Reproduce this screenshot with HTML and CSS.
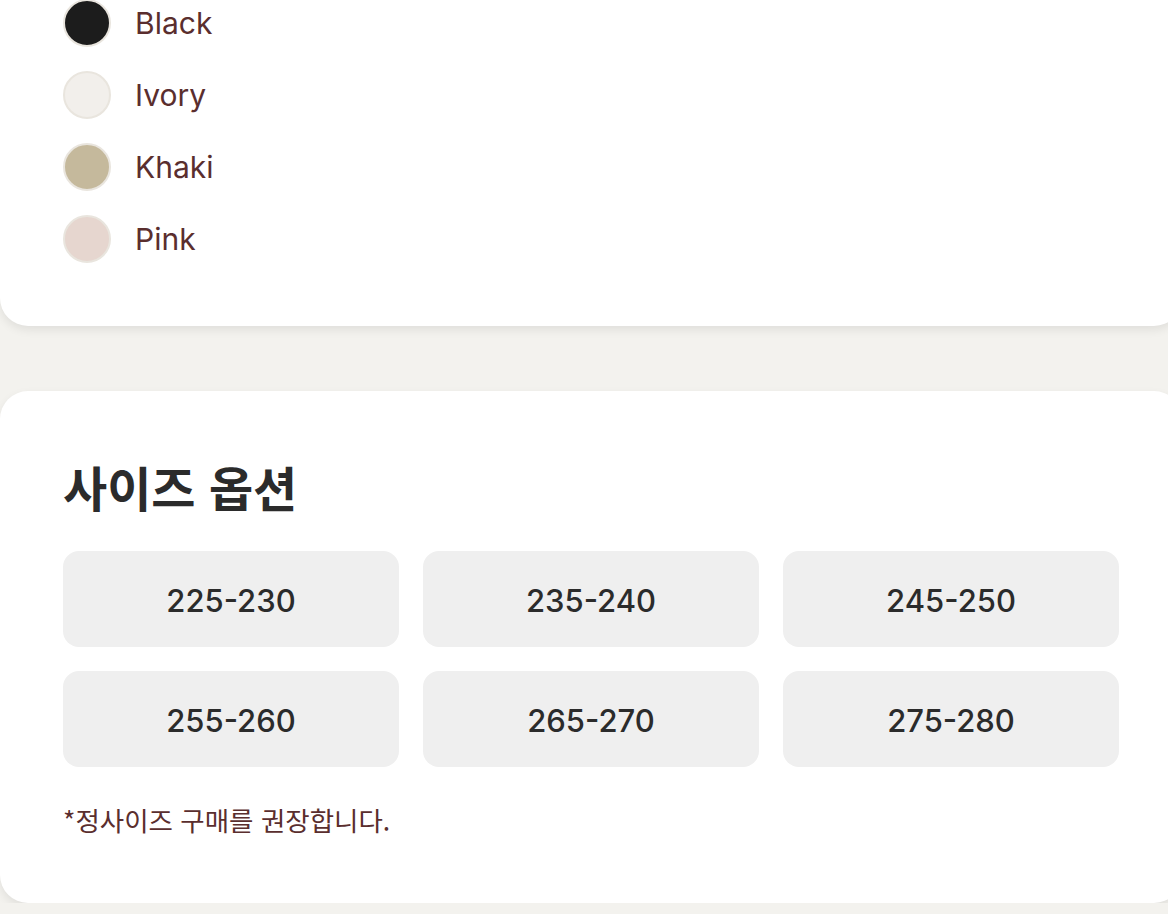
FILE: index.html
```html
<!DOCTYPE html>
<html lang="ko">
<head>
<meta charset="utf-8">
<title>옵션</title>
<link rel="stylesheet" href="styles.css">
</head>
<body>
<main class="page">
  <section class="card card--colors">
    <ul class="color-list">
      <li class="color-item"><span class="swatch swatch--black"></span><span class="color-name">Black</span></li>
      <li class="color-item"><span class="swatch swatch--ivory"></span><span class="color-name">Ivory</span></li>
      <li class="color-item"><span class="swatch swatch--khaki"></span><span class="color-name">Khaki</span></li>
      <li class="color-item"><span class="swatch swatch--pink"></span><span class="color-name">Pink</span></li>
    </ul>
  </section>
  <section class="card card--sizes">
    <h2 class="card-title">사이즈 옵션</h2>
    <div class="size-grid">
      <div class="size-btn">225-230</div>
      <div class="size-btn">235-240</div>
      <div class="size-btn">245-250</div>
      <div class="size-btn">255-260</div>
      <div class="size-btn">265-270</div>
      <div class="size-btn">275-280</div>
    </div>
    <p class="size-note">*정사이즈 구매를 권장합니다.</p>
  </section>
</main>
</body>
</html>
```

FILE: styles.css
```css
html, body {
  margin: 0;
  padding: 0;
}
body {
  background: #f3f2ee;
  font-family: Inter, "Noto Sans CJK KR", sans-serif;
  overflow: hidden;
}
.page {
  width: 1182px;
  display: flex;
  flex-direction: column;
  gap: 65px;
  margin-top: -1px;
}
.card {
  background: #ffffff;
  border-radius: 28px;
  box-shadow: 0 4px 10px rgba(0, 0, 0, 0.08);
  padding: 0 63px 63px;
  box-sizing: border-box;
}
.card--colors {
  border-top-left-radius: 0;
  border-top-right-radius: 0;
}
.color-list {
  list-style: none;
  margin: 0;
  padding: 0;
  display: flex;
  flex-direction: column;
  gap: 24px;
}
.color-item {
  display: flex;
  align-items: center;
  gap: 24px;
  height: 48px;
}
.swatch {
  width: 48px;
  height: 48px;
  border-radius: 50%;
  box-sizing: border-box;
  border: 2px solid #e9e5de;
  flex: none;
}
.swatch--black { background: #1c1c1c; }
.swatch--ivory { background: #f2efeb; }
.swatch--khaki { background: #c5b99c; }
.swatch--pink { background: #e6d6cf; }
.color-name {
  font-size: 30px;
  color: #5a2e2e;
  line-height: 1;
}
.card--sizes {
  padding-top: 67px;
  padding-bottom: 66px;
}
.card-title {
  margin: 0 0 35px;
  font-family: "Noto Sans CJK KR", sans-serif;
  font-size: 48px;
  font-weight: 700;
  line-height: 1.2;
  color: #2b2b2b;
}
.size-grid {
  display: grid;
  grid-template-columns: repeat(3, 1fr);
  gap: 24px;
}
.size-btn {
  height: 96px;
  box-sizing: border-box;
  padding-top: 3px;
  background: #efefef;
  border-radius: 16px;
  display: flex;
  align-items: center;
  justify-content: center;
  font-size: 31px;
  font-weight: 500;
  color: #2b2b2b;
}
.size-note {
  margin: 36px 0 0;
  font-family: "Noto Sans CJK KR", sans-serif;
  font-size: 26.5px;
  line-height: 1.3;
  color: #5a2e2e;
}
```
